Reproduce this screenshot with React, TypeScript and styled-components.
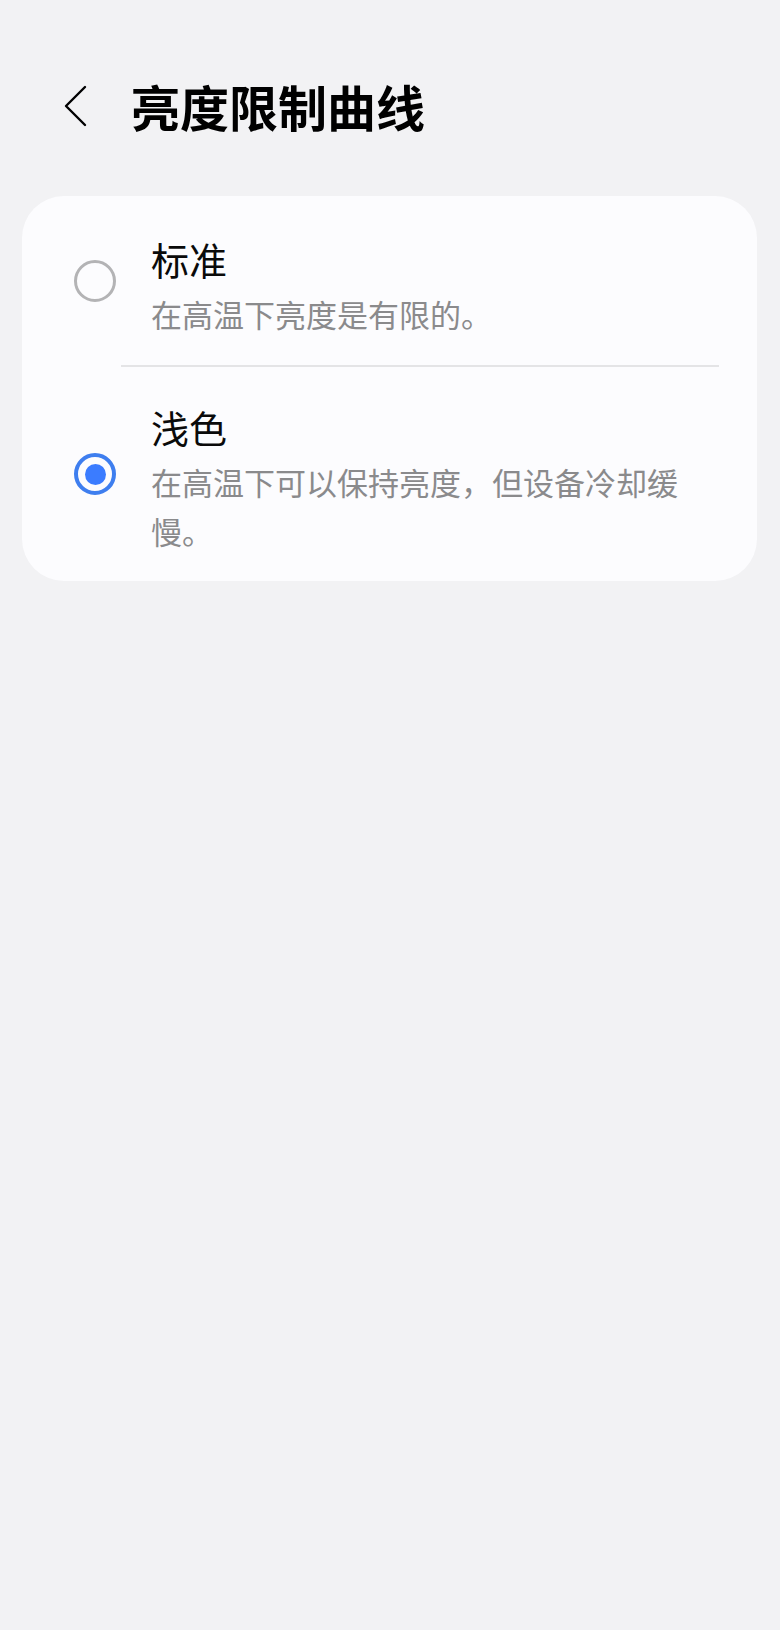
import React from "react";
import styled, { createGlobalStyle } from "styled-components";

const GlobalStyle = createGlobalStyle`
  html, body {
    margin: 0;
    padding: 0;
    background: #f2f2f4;
  }
  body {
    font-family: "Noto Sans CJK SC", "Noto Sans", sans-serif;
    -webkit-font-smoothing: antialiased;
  }
`;

const Page = styled.div`
  min-height: 1630px;
  background: #f2f2f4;
  padding-top: 76px;
  box-sizing: border-box;
`;

const Header = styled.header`
  display: flex;
  align-items: center;
  height: 60px;
  padding-left: 63px;
  gap: 44px;
`;

const BackButton = styled.button`
  display: flex;
  align-items: center;
  justify-content: center;
  width: 24px;
  height: 42px;
  padding: 0;
  border: none;
  background: transparent;
  cursor: pointer;
`;

const Title = styled.h1`
  margin: 0;
  font-size: 49px;
  line-height: 60px;
  font-weight: 700;
  color: #000;
  letter-spacing: 0;
`;

const Card = styled.section`
  margin: 60px 23px 0 22px;
  background: #fcfcfe;
  border-radius: 42px;
  overflow: hidden;
`;

const Option = styled.div`
  display: flex;
  align-items: center;
  padding: 0 61px 0 52px;
  gap: 35px;
  cursor: pointer;
`;

const Radio = styled.span<{ $checked: boolean }>`
  flex: 0 0 auto;
  box-sizing: border-box;
  width: 42px;
  height: 42px;
  border-radius: 50%;
  border: ${(p) => (p.$checked ? "4px solid #3e7eef" : "3px solid #b3b3b5")};
  display: flex;
  align-items: center;
  justify-content: center;

  &::after {
    content: "";
    display: ${(p) => (p.$checked ? "block" : "none")};
    width: 21px;
    height: 21px;
    border-radius: 50%;
    background: #3b7cff;
  }
`;

const TextBlock = styled.div<{ $afterDivider: boolean }>`
  flex: 1 1 auto;
  min-width: 0;
  padding: ${(p) => (p.$afterDivider ? "36px 0 26px" : "39px 0 27px")};
`;

const OptionTitle = styled.div`
  font-size: 38px;
  line-height: 48px;
  font-weight: 400;
  color: #0a0a0a;
`;

const OptionDesc = styled.div`
  margin-top: 6px;
  font-size: 31px;
  line-height: 49px;
  font-weight: 400;
  color: #8a8a8c;
`;

const Divider = styled.div`
  height: 2px;
  margin: 0 38px 0 99px;
  background: #e4e4e6;
`;

const options = [
  { title: "标准", desc: "在高温下亮度是有限的。", checked: false },
  {
    title: "浅色",
    desc: "在高温下可以保持亮度，但设备冷却缓慢。",
    checked: true,
  },
];

export default function App() {
  return (
    <>
      <GlobalStyle />
      <Page>
        <Header>
          <BackButton aria-label="返回">
            <svg width="24" height="42" viewBox="0 0 24 42">
              <path
                d="M22 2 L3 21 L22 40"
                fill="none"
                stroke="#000"
                strokeWidth="2.4"
                strokeLinecap="round"
                strokeLinejoin="round"
              />
            </svg>
          </BackButton>
          <Title>亮度限制曲线</Title>
        </Header>
        <Card>
          {options.map((o, i) => (
            <React.Fragment key={o.title}>
              {i > 0 && <Divider />}
              <Option>
                <Radio $checked={o.checked} />
                <TextBlock $afterDivider={i > 0}>
                  <OptionTitle>{o.title}</OptionTitle>
                  <OptionDesc>{o.desc}</OptionDesc>
                </TextBlock>
              </Option>
            </React.Fragment>
          ))}
        </Card>
      </Page>
    </>
  );
}
